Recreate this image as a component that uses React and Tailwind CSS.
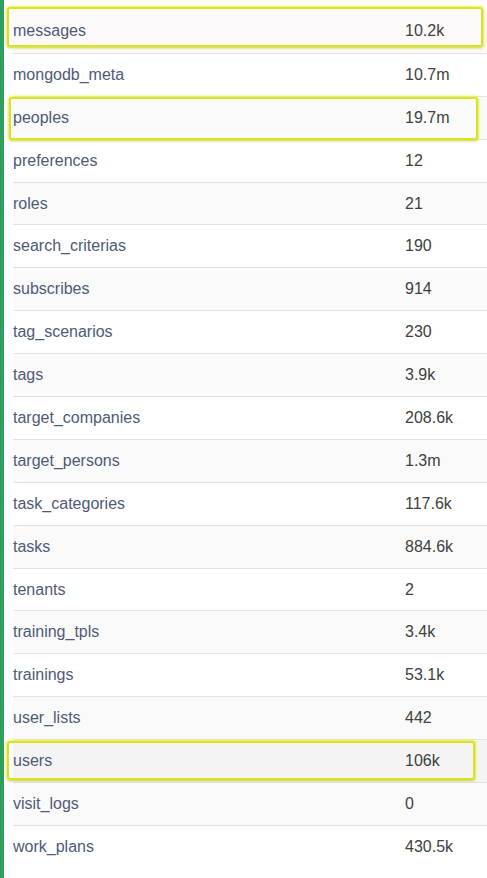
import React from 'react';

const rows = [
  ['messages', '10.2k'],
  ['mongodb_meta', '10.7m'],
  ['peoples', '19.7m'],
  ['preferences', '12'],
  ['roles', '21'],
  ['search_criterias', '190'],
  ['subscribes', '914'],
  ['tag_scenarios', '230'],
  ['tags', '3.9k'],
  ['target_companies', '208.6k'],
  ['target_persons', '1.3m'],
  ['task_categories', '117.6k'],
  ['tasks', '884.6k'],
  ['tenants', '2'],
  ['training_tpls', '3.4k'],
  ['trainings', '53.1k'],
  ['user_lists', '442'],
  ['users', '106k'],
  ['visit_logs', '0'],
  ['work_plans', '430.5k'],
];

// yellow annotation boxes drawn over the table
function Mark({ className }) {
  return (
    <div
      className={
        'absolute rounded-[3px] border-2 border-[#d9e31e] shadow-[0_0_3px_1px_rgba(230,240,60,0.8),0_1px_2px_rgba(0,0,0,0.25)] pointer-events-none ' +
        className
      }
    />
  );
}

export default function App() {
  return (
    <div
      className="relative flex w-[487px] h-[878px] bg-white overflow-hidden"
      style={{ fontFamily: '"Liberation Sans", Arial, sans-serif' }}
    >
      <div className="w-[4px] shrink-0 bg-[#2f9f5f]" />

      <div className="flex-1 pt-[10px] pl-[9px]">
        {rows.map(([name, count], i) => (
          <div
            key={name}
            className={
              'flex items-center h-[42.9px] text-[16px] ' +
              (i > 0 ? 'border-t border-[#e3e3e3] ' : '') +
              (name === 'users' ? 'bg-[#f4f4f4]' : i === 0 ? 'bg-[#fdf8f9]' : i % 2 === 0 ? 'bg-[#fafafa]' : 'bg-white')
            }
          >
            <span className="w-[392px] text-[#4e5a76]">{name}</span>
            <span className="text-[#404040]">{count}</span>
          </div>
        ))}
      </div>

      <Mark className="left-[7px] top-[7px] w-[476px] h-[40px]" />
      <Mark className="left-[9px] top-[97px] w-[469px] h-[43px]" />
      <Mark className="left-[7px] top-[741px] w-[468px] h-[39px]" />
    </div>
  );
}
